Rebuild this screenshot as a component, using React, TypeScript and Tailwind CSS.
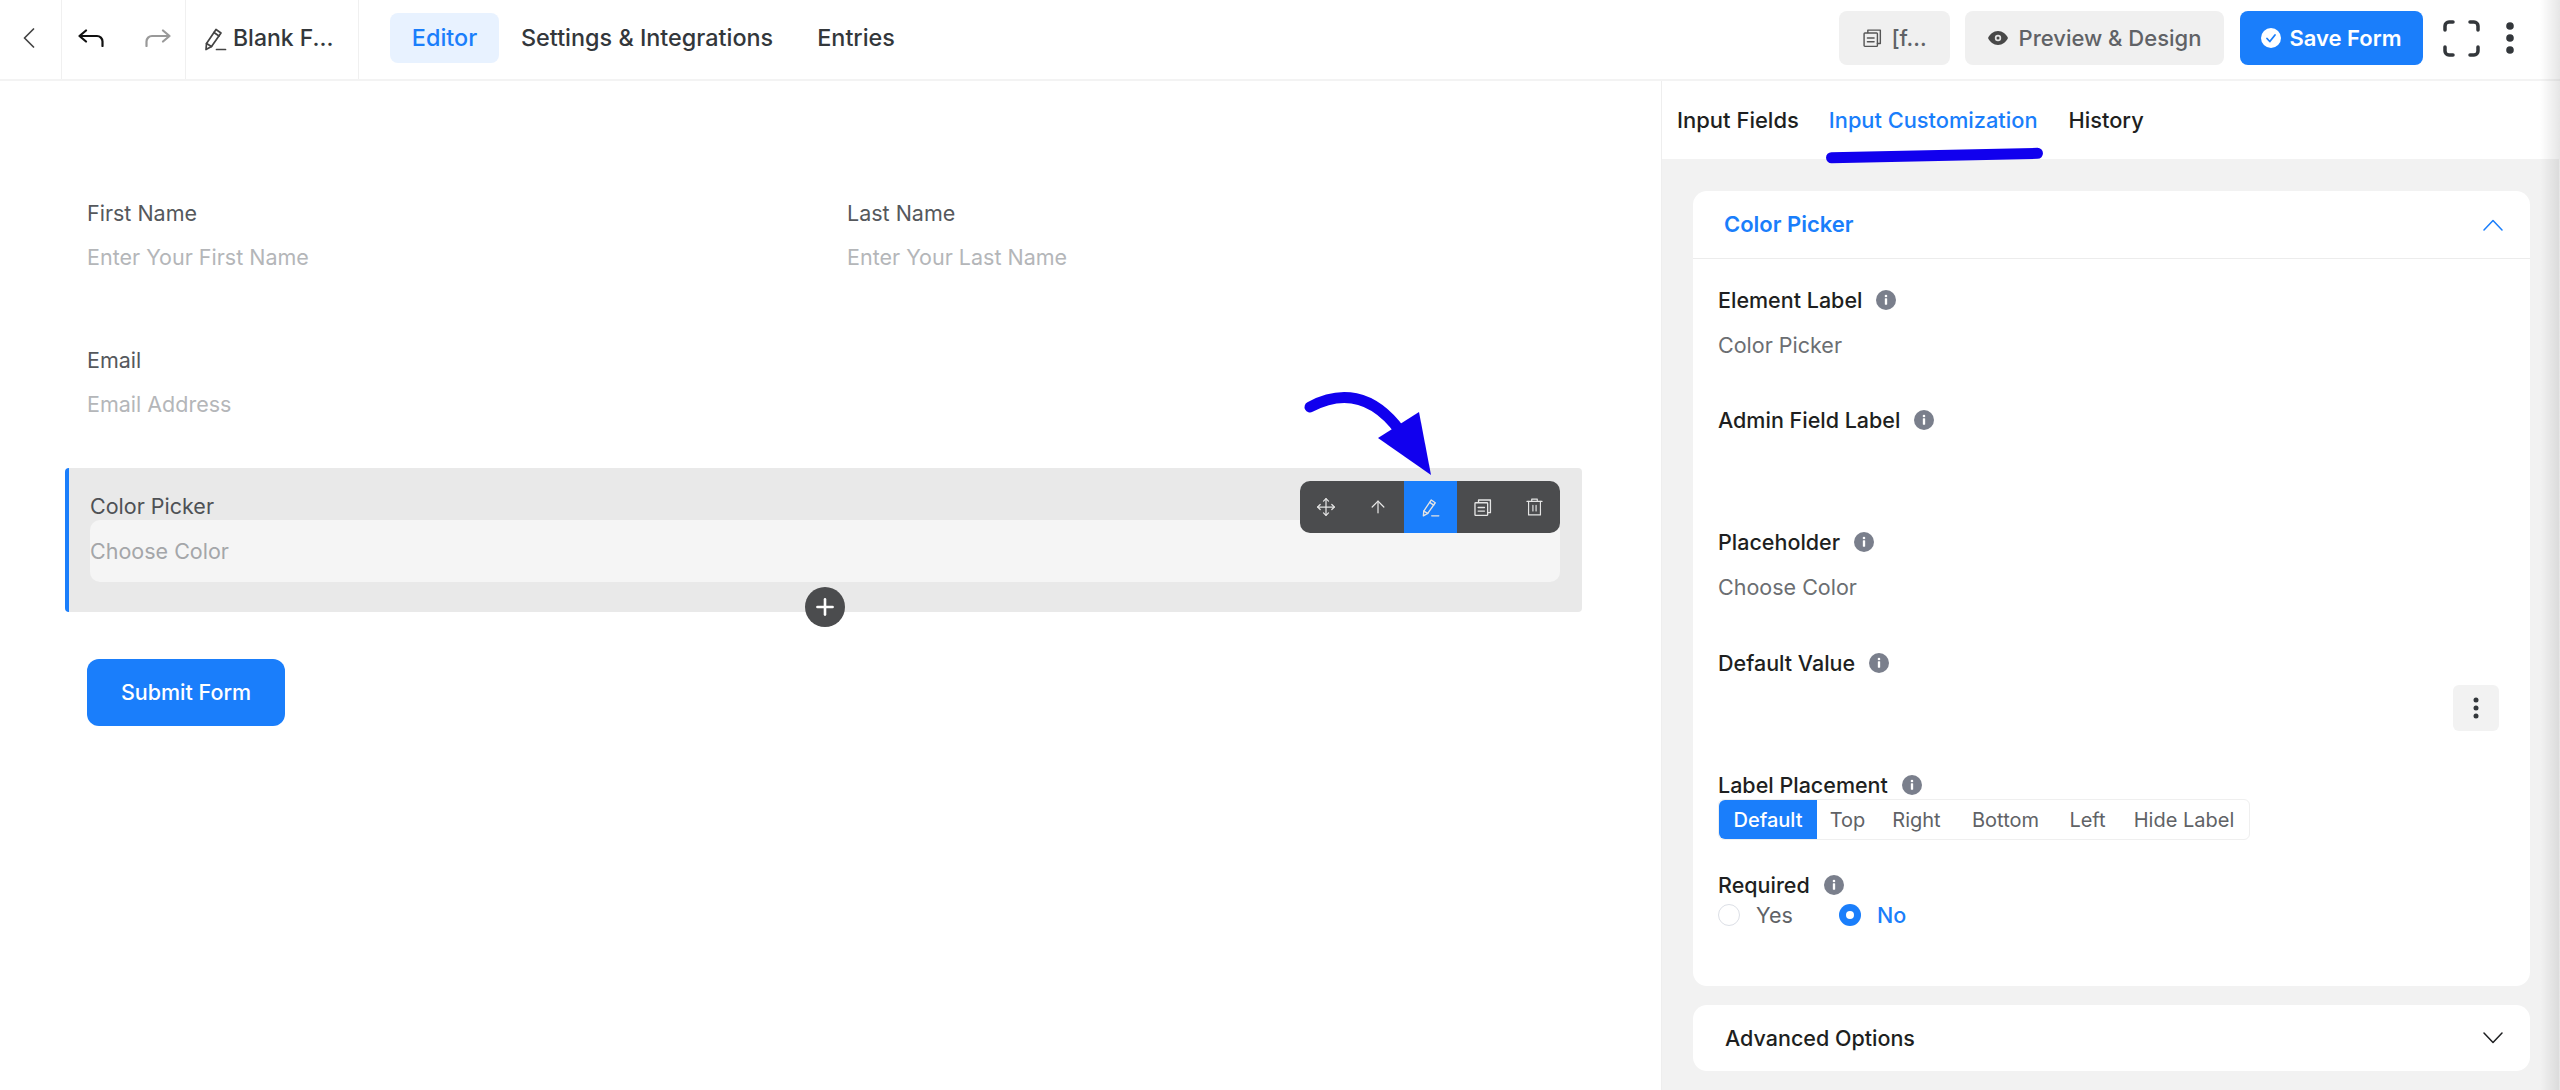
import { ArrowUp, Move, Plus } from "lucide-react";

function PencilIcon({ className }: { className?: string }) {
    return <svg viewBox="0 0 24 24" fill="none" stroke="currentColor" strokeWidth="1.7" strokeLinejoin="round" strokeLinecap="round" className={className}>
        <path d="M3 22.500 3.500 16.500 13 2.500l5 3.500-9.500 13.500z" />
        <path d="M11 5.500l5 3.500M3.500 16.500l5 3" />
        <path d="M13.500 22.500h9" />
    </svg>
}

function CopyIcon({ className }: { className?: string }) {
    return <svg viewBox="0 0 24 24" fill="none" stroke="currentColor" strokeWidth="1.7" strokeLinejoin="round" strokeLinecap="round" className={className}>
        <path d="M7 5.500V2.500h15v16h-3.500" />
        <rect x="2.500" y="6" width="16" height="16" rx="1" />
        <path d="M6.500 12h8M6.500 16.500h8" />
    </svg>
}

function TrashIcon({ className }: { className?: string }) {
    return <svg viewBox="0 0 24 24" fill="none" stroke="currentColor" strokeWidth="1.5" strokeLinejoin="round" strokeLinecap="round" className={className}>
        <path d="M2.500 5h19M8.500 5V2h7v3" />
        <path d="M4.500 5v17h15V5" />
        <path d="M10 10v7M14 10v7" />
    </svg>
}

function Chevron({ up }: { up?: boolean }) {
    return <svg viewBox="0 0 20 12" fill="none" stroke="currentColor" strokeWidth="1.500" strokeLinecap="round" strokeLinejoin="round" className="w-[20px] h-[12px]">
        <path d={up ? "M1 11 10 1.500 19 11" : "M1 1 10 10.500 19 1"} />
    </svg>
}

function InfoDot() {
    return <span className="w-[20px] h-[20px] rounded-full bg-[#7a7f8c] flex items-center justify-center ml-[14px]">
        <svg viewBox="0 0 12 12" className="w-[14px] h-[14px]" fill="white">
            <circle cx="6" cy="2.600" r="1.100" />
            <rect x="5" y="4.600" width="2" height="5.400" rx="0.400" />
        </svg>
    </span>
}

function FieldLabel({ text, className }: { text: string, className?: string }) {
    return <div className={`flex items-center h-[30px] text-[21.5px] font-medium text-[#1e1f21] ${className ?? ""}`}>
        {text}
        <InfoDot />
    </div>
}

function FormField({ label, placeholder }: { label: string, placeholder: string }) {
    return <div>
        <div className="h-[32px] leading-[32px] text-[21.5px] text-[#55585c]">{label}</div>
        <div className="h-[32px] leading-[32px] mt-[12px] text-[21.5px] text-[#b4b6b9]">{placeholder}</div>
    </div>
}

export default function App() {
    const placements = [
        { name: "Top", width: "w-[61px]" },
        { name: "Right", width: "w-[77px]" },
        { name: "Bottom", width: "w-[101px]" },
        { name: "Left", width: "w-[63px]" },
        { name: "Hide Label", width: "w-[130px]" },
    ]

    return <div className="relative w-[2560px] h-[1090px] overflow-hidden bg-white font-['Inter',sans-serif]">
        <header className="h-[81px] flex items-center border-b-2 border-[#f3f3f3]">
            <div className="w-[62px] h-full flex items-center pl-[23px] pb-[4px] border-r border-[#f0f0f0]">
                <svg viewBox="0 0 12 20" fill="none" stroke="#444" strokeWidth="1.700" strokeLinecap="round" strokeLinejoin="round" className="w-[12px] h-[20px]">
                    <path d="M10.500 1 1.500 10l9 9" />
                </svg>
            </div>
            <div className="w-[124px] h-full flex items-center gap-[41px] pl-[16px] pb-[4px] border-r border-[#f0f0f0]">
                <svg viewBox="0 0 26 18" fill="none" stroke="#111" strokeWidth="2.200" strokeLinecap="round" strokeLinejoin="round" className="w-[26px] h-[18px]">
                    <path d="M8 1.500 1.500 7 8 12.500M1.500 7H19a5.500 5.500 0 0 1 5.500 5.500V17" />
                </svg>
                <svg viewBox="0 0 26 18" fill="none" stroke="#999" strokeWidth="2.200" strokeLinecap="round" strokeLinejoin="round" className="w-[26px] h-[18px]">
                    <path d="M18 1.500 24.500 7 18 12.500M24.500 7H7a5.500 5.500 0 0 0-5.500 5.500V17" />
                </svg>
            </div>
            <div className="w-[173px] h-full flex items-center pl-[17px] pb-[2px] gap-[6px] border-r border-[#f0f0f0] text-[23px] font-medium text-[#33373b]">
                <PencilIcon className="w-[24px] h-[24px] text-[#444]" />
                Blank F...
            </div>
            <nav className="flex items-center ml-[31px] mb-[3px] text-[23.4px] font-medium text-[#33373b]">
                <div className="w-[109px] h-[50px] rounded-[8px] bg-[#e8f2ff] text-[#1a7efb] flex items-center justify-center">Editor</div>
                <div className="ml-[22px]">Settings &amp; Integrations</div>
                <div className="ml-[44px]">Entries</div>
            </nav>
            <div className="ml-auto mb-[3px] flex items-center">
                <div className="w-[111px] h-[54px] rounded-[8px] bg-[#f0f0f0] flex items-center justify-center gap-[9px] text-[22px] font-medium text-[#606266]">
                    <CopyIcon className="w-[20px] h-[20px] text-[#555]" />
                    [f...
                </div>
                <div className="w-[259px] h-[54px] ml-[15px] rounded-[8px] bg-[#f0f0f0] flex items-center justify-center gap-[11px] text-[22px] font-medium text-[#606266]">
                    <svg viewBox="0 0 20 14" className="w-[20px] h-[14px]">
                        <path fill="#484848" d="M10 0c4.500 0 8 3.200 10 7-2 3.800-5.500 7-10 7S2 10.800 0 7c2-3.800 5.500-7 10-7z" />
                        <circle cx="10" cy="7" r="3.200" fill="#e4e4e4" />
                        <circle cx="10" cy="7" r="1.500" fill="#484848" />
                    </svg>
                    Preview &amp; Design
                </div>
                <div className="w-[183px] h-[54px] ml-[16px] rounded-[8px] bg-[#1a7efb] flex items-center justify-center gap-[8px] text-[22px] font-semibold text-white">
                    <svg viewBox="0 0 20 20" className="w-[20px] h-[20px]">
                        <circle cx="10" cy="10" r="10" fill="white" />
                        <path d="M6 10.500l2.800 3L14 7" fill="none" stroke="#1a7efb" strokeWidth="1.800" strokeLinecap="round" strokeLinejoin="round" />
                    </svg>
                    Save Form
                </div>
                <svg viewBox="0 0 37 37" fill="none" stroke="#33373b" strokeWidth="3.500" strokeLinecap="round" className="w-[37px] h-[37px] ml-[20px]">
                    <path d="M2 10V6a4 4 0 0 1 4-4h4M27 2h4a4 4 0 0 1 4 4v4M35 27v4a4 4 0 0 1-4 4h-4M10 35H6a4 4 0 0 1-4-4v-4" />
                </svg>
                <svg viewBox="0 0 8 32" fill="#33373b" className="w-[8px] h-[32px] ml-[26px] mr-[46px]">
                    <circle cx="4" cy="4" r="3.800" />
                    <circle cx="4" cy="16" r="3.800" />
                    <circle cx="4" cy="28" r="3.800" />
                </svg>
            </div>
        </header>
        <main className="flex h-[1009px]">
            <section className="relative w-[1662px] border-r border-[#eeeeee] pt-[116px]">
                <div className="grid grid-cols-[760px_1fr] pl-[87px]">
                    <FormField label="First Name" placeholder="Enter Your First Name" />
                    <FormField label="Last Name" placeholder="Enter Your Last Name" />
                </div>
                <div className="pl-[87px] mt-[71px]">
                    <FormField label="Email" placeholder="Email Address" />
                </div>
                <div className="relative ml-[65px] mt-[48px] w-[1517px] h-[144px] bg-[#e9e9e9] border-l-[4px] border-[#1a7efb] rounded-[4px] pl-[21px] pr-[22px] pt-[24px]">
                    <div className="h-[28px] leading-[28px] text-[21.5px] text-[#4e5155]">Color Picker</div>
                    <div className="h-[62px] bg-[#f5f5f5] rounded-[10px] flex items-center text-[21.5px] text-[#a4a6a9]">Choose Color</div>
                    <div className="absolute left-[1231px] top-[13px] w-[260px] h-[52px] rounded-[10px] bg-[#4b4c4e] flex overflow-hidden text-[#e4e4e4]">
                        <div className="w-[52px] flex items-center justify-center"><Move className="w-[20px] h-[20px]" strokeWidth={1.5} /></div>
                        <div className="w-[52px] flex items-center justify-center"><ArrowUp className="w-[20px] h-[20px]" strokeWidth={1.5} /></div>
                        <div className="w-[53px] flex items-center justify-center bg-[#1a7efb]"><PencilIcon className="w-[19px] h-[19px]" /></div>
                        <div className="w-[51px] flex items-center justify-center"><CopyIcon className="w-[19px] h-[19px]" /></div>
                        <div className="w-[52px] flex items-center justify-center"><TrashIcon className="w-[19px] h-[20px]" /></div>
                    </div>
                    <div className="absolute left-[736px] top-[119px] w-[40px] h-[40px] rounded-full bg-[#4b4c4e] flex items-center justify-center">
                        <Plus className="w-[26px] h-[26px] text-white" strokeWidth={2.4} />
                    </div>
                </div>
                <button className="block ml-[87px] mt-[47px] w-[198px] h-[67px] rounded-[12px] bg-[#1a7efb] text-[21.5px] font-medium text-white">Submit Form</button>
                <svg viewBox="0 0 140 100" className="absolute left-[1300px] top-[304px] w-[140px] h-[100px]">
                    <path d="M10 22C40 6 72 8 100 46" fill="none" stroke="#1100ee" strokeWidth="11" strokeLinecap="round" />
                    <path d="M119 27 131 90 78 53z" fill="#1100ee" />
                </svg>
            </section>
            <aside className="relative w-[897px] flex flex-col">
                <div className="h-[78px] bg-white flex items-center pl-[15px] text-[22px] font-medium text-[#1e1f21]">
                    <span>Input Fields</span>
                    <span className="ml-[30px] text-[21.8px] text-[#1a7efb]">Input Customization</span>
                    <span className="ml-[31px] text-[21.8px]">History</span>
                </div>
                <div className="absolute left-[164px] top-[69px] w-[217px] h-[11px] rounded-full bg-[#1100ee] -rotate-[1.2deg]" />
                <div className="flex-1 bg-[#f2f2f2] pl-[31px] pt-[32px]">
                    <div className="w-[837px] h-[795px] bg-white rounded-[14px] flex flex-col">
                        <div className="h-[68px] border-b border-[#ececec] flex items-center justify-between pl-[31px] pr-[27px] text-[22px] font-semibold text-[#1a7efb]">
                            Color Picker
                            <Chevron up />
                        </div>
                        <div className="flex flex-col pl-[25px] pt-[26px]">
                            <FieldLabel text="Element Label" />
                            <div className="h-[30px] leading-[30px] mt-[15px] text-[21.5px] text-[#6b6e72]">Color Picker</div>
                            <FieldLabel text="Admin Field Label" className="mt-[45px]" />
                            <FieldLabel text="Placeholder" className="mt-[92px]" />
                            <div className="h-[30px] leading-[30px] mt-[15px] text-[21.5px] text-[#6b6e72]">Choose Color</div>
                            <FieldLabel text="Default Value" className="mt-[46px]" />
                            <div className="self-end mr-[31px] mt-[7px] w-[46px] h-[46px] rounded-[6px] bg-[#f2f2f2] flex items-center justify-center">
                                <svg viewBox="0 0 6 22" fill="#33373b" className="w-[6px] h-[22px]">
                                    <circle cx="3" cy="3" r="2.500" />
                                    <circle cx="3" cy="11" r="2.500" />
                                    <circle cx="3" cy="19" r="2.500" />
                                </svg>
                            </div>
                            <FieldLabel text="Label Placement" className="mt-[39px]" />
                            <div className="mt-[-1px] w-[532px] h-[41px] flex items-center rounded-[6px] border border-[#efefef] text-[20px] text-[#606266]">
                                <div className="w-[98px] h-full bg-[#1a7efb] rounded-l-[6px] text-white font-medium flex items-center justify-center">Default</div>
                                {placements.map(p => <div key={p.name} className={`${p.width} text-center`}>{p.name}</div>)}
                            </div>
                            <FieldLabel text="Required" className="mt-[30px]" />
                            <div className="h-[30px] flex items-center text-[21.5px]">
                                <span className="w-[22px] h-[22px] rounded-full border border-[#dcdfe6]" />
                                <span className="ml-[16px] w-[83px] text-[#606266]">Yes</span>
                                <span className="w-[22px] h-[22px] rounded-full bg-[#1a7efb] flex items-center justify-center">
                                    <span className="w-[8px] h-[8px] rounded-full bg-white" />
                                </span>
                                <span className="ml-[16px] text-[#1a7efb] font-medium">No</span>
                            </div>
                        </div>
                    </div>
                    <div className="w-[837px] h-[66px] mt-[19px] bg-white rounded-[14px] flex items-center justify-between pl-[32px] pr-[27px] text-[21.5px] font-medium text-[#1e1f21]">
                        Advanced Options
                        <Chevron />
                    </div>
                </div>
            </aside>
        </main>
        <div className="absolute right-0 top-0 w-[20px] h-full bg-gradient-to-r from-transparent to-black/10" />
    </div>
}
